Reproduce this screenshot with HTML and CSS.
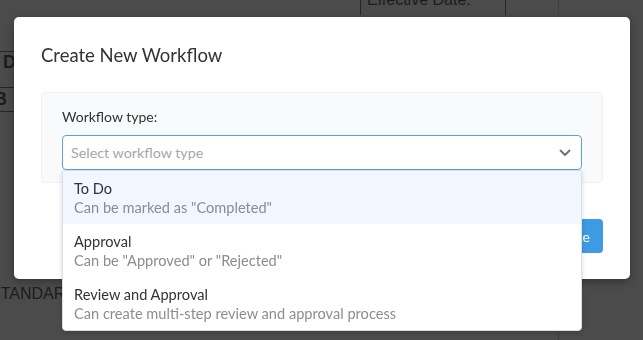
FILE: index.html
```html
<!DOCTYPE html>
<html lang="en">
<head>
  <meta charset="UTF-8">
  <meta name="viewport" content="width=device-width, initial-scale=1.0">
  <title>Create New Workflow</title>
  <link rel="stylesheet" href="styles.css">
</head>
<body>
  <!-- dimmed page behind the dialog -->
  <div class="page">
    <div class="page-main">
      <div class="top-row">
        <div class="top-spacer"></div>
        <div class="top-cell"><span class="top-cell-text">Effective Date:</span></div>
        <div class="top-cell top-cell-last"></div>
      </div>
      <div class="side-table">
        <div class="side-row side-row-d">D</div>
        <div class="side-row side-row-b">B</div>
      </div>
      <div class="page-note">STANDARD</div>
    </div>
    <div class="page-side"></div>
  </div>

  <div class="modal">
    <h1 class="modal-title">Create New Workflow</h1>

    <div class="form-panel">
      <label class="field-label" for="workflowType">Workflow type:</label>
      <div class="select-wrap">
        <div class="select-box" id="workflowType">
          <span class="select-placeholder">Select workflow type</span>
          <svg class="select-chevron" width="12" height="8" viewBox="0 0 12 8">
            <path d="M1.5 1.5 L6 6 L10.5 1.5" fill="none" stroke="#6b7075" stroke-width="1.8" stroke-linecap="round" stroke-linejoin="round"/>
          </svg>
        </div>
        <ul class="select-menu">
          <li class="select-option is-active">
            <span class="option-name">To Do</span>
            <span class="option-desc">Can be marked as "Completed"</span>
          </li>
          <li class="select-option">
            <span class="option-name">Approval</span>
            <span class="option-desc">Can be "Approved" or "Rejected"</span>
          </li>
          <li class="select-option">
            <span class="option-name">Review and Approval</span>
            <span class="option-desc">Can create multi-step review and approval process</span>
          </li>
        </ul>
      </div>
    </div>

    <div class="modal-footer">
      <button type="button" class="btn-primary">Create</button>
    </div>
  </div>
</body>
</html>
```

FILE: styles.css
```css
:root {
  --backdrop: #4b4b4b;
  --page-ink: #1c1c1c;
  --page-line: #262626;
  --text: #333333;
  --text-muted: #8a8d91;
  --placeholder: #a3a7ab;
  --focus: #5b9fde;
  --primary: #3d9be4;
  --option-hover: #f0f7fe;
}

* {
  margin: 0;
  padding: 0;
  box-sizing: border-box;
}

body {
  background-color: var(--backdrop);
  font-family: Lato, 'Noto Sans', sans-serif;
  overflow: hidden;
}

/* page behind the overlay */
.page {
  display: flex;
  height: 340px;
  font-family: 'Liberation Sans', Arial, sans-serif;
  color: var(--page-ink);
}

.page-main {
  width: 558px;
}

.page-side {
  flex: 1;
  border-left: 1px solid #404040;
}

.top-row {
  display: flex;
  height: 15px;
}

.top-spacer {
  width: 360px;
}

.top-cell {
  width: 145px;
  border-left: 1px solid var(--page-line);
  padding-left: 6px;
  overflow: hidden;
}

.top-cell-text {
  display: block;
  margin-top: -9px;
  font-size: 16px;
  line-height: 18px;
  white-space: nowrap;
}

.top-cell-last {
  flex: 1;
}

.side-table {
  margin-top: 36px;
  width: 14px;
  border-top: 1px solid var(--page-line);
  border-bottom: 1px solid var(--page-line);
}

.side-row {
  font-weight: bold;
  font-size: 18px;
  line-height: 18px;
}

.side-row-d {
  height: 36px;
  padding: 1px 0 0 3px;
  border-bottom: 1px solid var(--page-line);
}

.side-row-b {
  height: 23px;
  padding-top: 2px;
  margin-left: -6px;
}

.page-note {
  margin-top: 173px;
  margin-left: -10px;
  font-size: 16px;
}

/* dialog */
.modal {
  position: fixed;
  top: 17px;
  left: 14px;
  width: 616px;
  padding: 26px 27px 26px;
  background-color: #fff;
  border-radius: 5px;
  box-shadow: 0 3px 8px rgba(0, 0, 0, 0.3);
}

.modal-title {
  font-size: 18.5px;
  font-weight: 400;
  line-height: 24px;
  color: var(--text);
  margin-bottom: 25px;
}

.form-panel {
  padding: 15px 20px 12px;
  background-color: #f9fafb;
  border: 1px solid #eef0f1;
  border-radius: 4px;
}

.field-label {
  display: block;
  font-size: 14px;
  line-height: 18px;
  color: var(--text);
  margin-bottom: 9px;
}

.select-wrap {
  position: relative;
}

.select-box {
  display: flex;
  align-items: center;
  justify-content: space-between;
  height: 35px;
  padding: 0 10px 0 8px;
  background-color: #fff;
  border: 1px solid var(--focus);
  border-radius: 4px;
}

.select-placeholder {
  font-size: 14.3px;
  color: var(--placeholder);
}

.select-menu {
  position: absolute;
  top: 100%;
  left: 0;
  right: 0;
  list-style: none;
  background-color: #fff;
  border: 1px solid #dcdfe2;
  border-radius: 0 0 4px 4px;
  box-shadow: 0 2px 5px rgba(0, 0, 0, 0.15);
  z-index: 2;
}

.select-option {
  display: flex;
  flex-direction: column;
  padding: 8px 12px 7px 11px;
  font-size: 14.6px;
  line-height: 19px;
}

.select-option.is-active {
  background-color: var(--option-hover);
}

.option-name {
  color: var(--text);
}

.option-desc {
  color: var(--text-muted);
}

.modal-footer {
  display: flex;
  justify-content: flex-end;
  margin-top: 36px;
}

.btn-primary {
  height: 34px;
  padding: 0 13px;
  background-color: var(--primary);
  color: #fff;
  border: none;
  border-radius: 4px;
  font-family: inherit;
  font-size: 14px;
  cursor: pointer;
}
```
